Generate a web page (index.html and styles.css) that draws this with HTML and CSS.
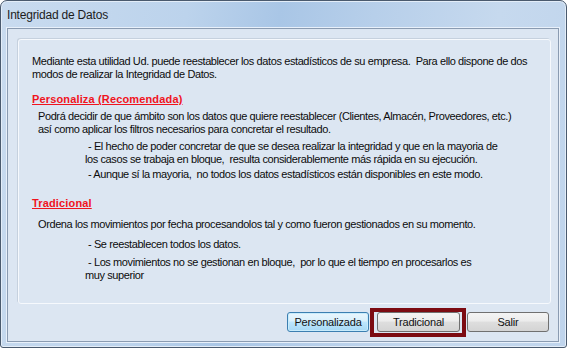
FILE: index.html
```html
<!DOCTYPE html>
<html lang="es">
<head>
    <meta charset="UTF-8">
    <title>Integridad de Datos</title>
    <link rel="stylesheet" href="styles.css">
</head>
<body>
    <div class="window">
        <div class="titlebar">Integridad de Datos</div>
        <div class="client">
            <div class="panel">
                <p class="intro">Mediante esta utilidad Ud. puede reestablecer los datos estadísticos de su empresa.&nbsp; Para ello dispone de dos<br>modos de realizar la Integridad de Datos.</p>

                <h2 class="mode first">Personaliza (Recomendada)</h2>
                <p class="desc">Podrá decidir de que ámbito son los datos que quiere reestablecer (Clientes, Almacén, Proveedores, etc.)<br>así como aplicar los filtros necesarios para concretar el resultado.</p>
                <p class="note n1">- El hecho de poder concretar de que se desea realizar la integridad y que en la mayoria de<br>los casos se trabaja en bloque,&nbsp; resulta considerablemente más rápida en su ejecución.</p>
                <p class="note n2">- Aunque sí la mayoria,&nbsp; no todos los datos estadísticos están disponibles en este modo.</p>

                <h2 class="mode second">Tradicional</h2>
                <p class="desc d2">Ordena los movimientos por fecha procesandolos tal y como fueron gestionados en su momento.</p>
                <p class="note n3">- Se reestablecen todos los datos.</p>
                <p class="note n4">- Los movimientos no se gestionan en bloque,&nbsp; por lo que el tiempo en procesarlos es<br>muy superior</p>
            </div>
            <div class="buttons">
                <button class="btn default">Personalizada</button>
                <button class="btn marked">Tradicional</button>
                <button class="btn">Salir</button>
            </div>
        </div>
    </div>
</body>
</html>
```

FILE: styles.css
```css
* {
    box-sizing: border-box;
}
body {
    margin: 0;
    padding: 0;
    background-color: #ffffff;
    font-family: "Liberation Sans", Arial, sans-serif;
}
.window {
    width: 567px;
    height: 348px;
    border: 1px solid #4a5a6e;
    border-radius: 7px 7px 3px 3px;
    background: linear-gradient(100deg, #c9dbef 0%, #bcd3ec 30%, #a9c6e6 45%, #b7cfea 60%, #c6d9ee 80%, #bfd4ec 100%);
    box-shadow: inset 0 0 0 1px #e3edf8;
    padding: 0 7px 5px 6px;
}
.titlebar {
    height: 27px;
    font-size: 12px;
    line-height: 28px;
    letter-spacing: -0.2px;
    color: #1c1c1c;
}
.client {
    height: 314px;
    border: 1px solid #8a9bb1;
    background-color: #dce6f2;
    box-shadow: 0 0 0 1px #e8f0fa;
    padding: 10px 7px 0 10px;
}
.panel {
    height: 265px;
    border: 1px solid #f6f9fd;
    border-radius: 3px;
    box-shadow: -1px -1px 0 #c6d1de;
    padding: 15px 10px 0 13px;
    font-size: 11px;
    line-height: 13px;
    letter-spacing: -0.4px;
    color: #0c0c0c;
}
.panel p {
    margin: 0;
    white-space: nowrap;
}
.mode {
    margin: 0;
    font-size: 11px;
    line-height: 13px;
    font-weight: bold;
    letter-spacing: 0.15px;
    color: #f0141e;
    text-decoration: underline;
}
.mode.first {
    margin-top: 12px;
}
.mode.second {
    margin-top: 16px;
}
.desc {
    padding-left: 6px;
    margin-top: 4px !important;
}
.desc.d2 {
    margin-top: 8px !important;
}
.note {
    padding-left: 53px;
    text-indent: 3px;
}
.note.n1 {
    margin-top: 4px !important;
}
.note.n2 {
    margin-top: 2px !important;
}
.note.n3 {
    margin-top: 7px !important;
}
.note.n4 {
    margin-top: 5px !important;
}
.buttons {
    display: flex;
    justify-content: flex-end;
    gap: 7px;
    padding: 8px 2px 0 0;
}
.btn {
    position: relative;
    width: 82px;
    height: 20px;
    padding: 0;
    border: 1px solid #707070;
    border-radius: 3px;
    background: linear-gradient(#f4f4f4 0%, #ececec 45%, #dedede 50%, #d4d4d4 100%);
    font-family: "Liberation Sans", Arial, sans-serif;
    font-size: 11px;
    letter-spacing: -0.2px;
    color: #111111;
}
.btn.default {
    border-color: #3c7fb1;
    background: linear-gradient(#eaf6fd 0%, #d9f0fc 45%, #bee6fd 50%, #a7d9f5 100%);
    box-shadow: inset 0 0 0 1px #c8ecfc;
}
.btn.marked {
    width: 83px;
    margin-left: 1px;
}
.btn.marked::after {
    content: "";
    position: absolute;
    top: -5px;
    bottom: -6px;
    left: -8px;
    right: -7px;
    border: 4px solid #7c0b12;
}
```
